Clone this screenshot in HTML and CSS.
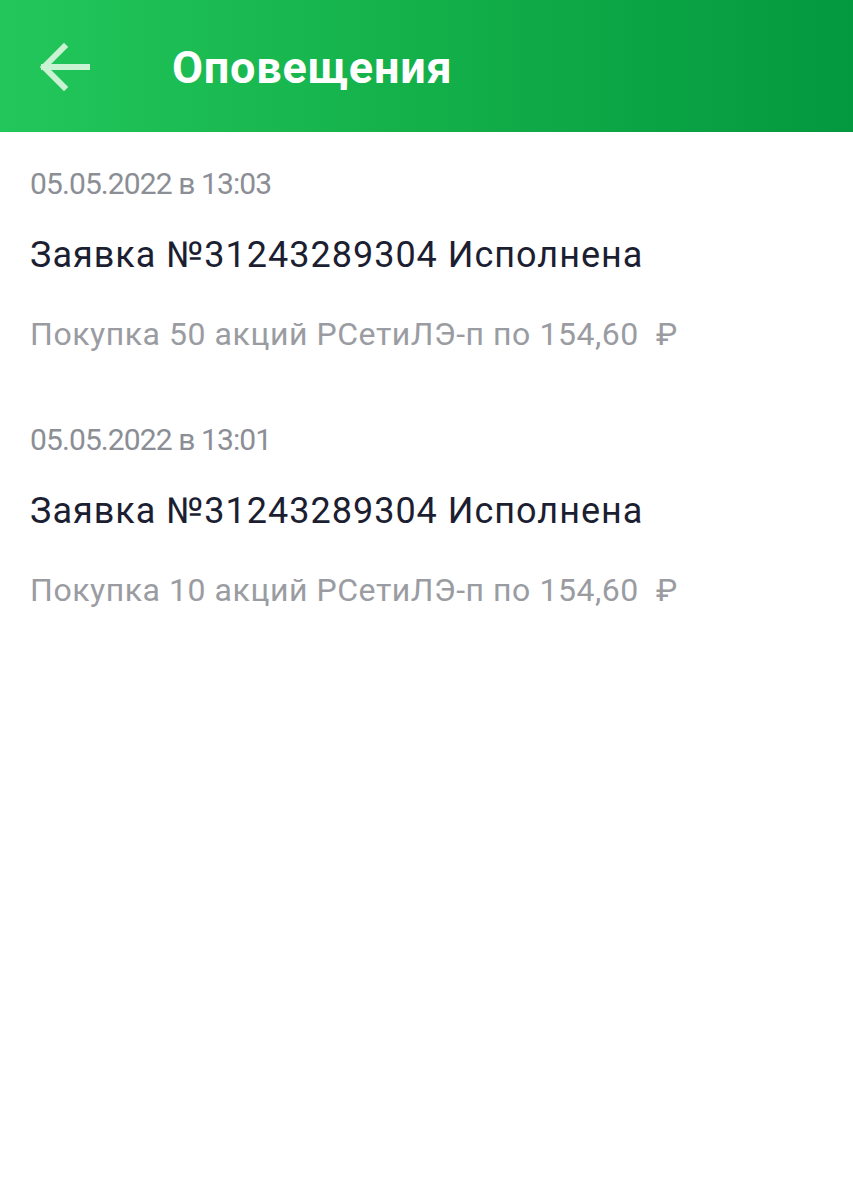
FILE: index.html
```html
<!DOCTYPE html>
<html lang="ru">
<head>
<meta charset="utf-8">
<link rel="stylesheet" href="styles.css">
</head>
<body>
<header class="topbar">
  <svg class="back" width="56" height="54" viewBox="0 0 56 54" fill="none" stroke="#c9f3d3" stroke-width="6" stroke-linecap="square">
    <path d="M8 27 H51"/>
    <path d="M28 7 L8 27 L28 47" stroke-linejoin="miter"/>
  </svg>
  <h1 class="title">Оповещения</h1>
</header>
<main class="list">
  <section class="item">
    <div class="date">05.05.2022 в 13:03</div>
    <div class="head">Заявка №31243289304 Исполнена</div>
    <div class="desc">Покупка 50 акций РСетиЛЭ-п по 154,60 &nbsp;₽</div>
  </section>
  <section class="item">
    <div class="date">05.05.2022 в 13:01</div>
    <div class="head">Заявка №31243289304 Исполнена</div>
    <div class="desc">Покупка 10 акций РСетиЛЭ-п по 154,60 &nbsp;₽</div>
  </section>
</main>
</body>
</html>
```
FILE: styles.css
```css
* { box-sizing: border-box; }
html, body { margin: 0; padding: 0; background: #fff; }
body { font-family: Roboto, "Noto Sans", sans-serif; width: 853px; }
.topbar {
  height: 132px;
  background: linear-gradient(90deg, #22c75b 0%, #15b24b 45%, #03993f 100%);
  display: flex;
  align-items: center;
  padding-left: 36px;
}
.back { display: block; margin-top: 2px; }
.title {
  margin: 0 0 0 80px;
  color: #fff;
  font-size: 45px;
  line-height: 54px;
  font-weight: 700;
  letter-spacing: 0.8px;
  margin-top: 4px;
}
.list { padding: 0 30px; }
.item { padding-top: 68px; }
.item:first-child { padding-top: 34px; }
.date { color: #8b8e94; font-size: 30px; line-height: 36px; letter-spacing: -0.9px; }
.head { color: #1c1e31; font-size: 36px; line-height: 40px; letter-spacing: 1px; margin-top: 33px; }
.desc { color: #9a9ca2; font-size: 32px; line-height: 40px; letter-spacing: 0.55px; margin-top: 39px; }
```
